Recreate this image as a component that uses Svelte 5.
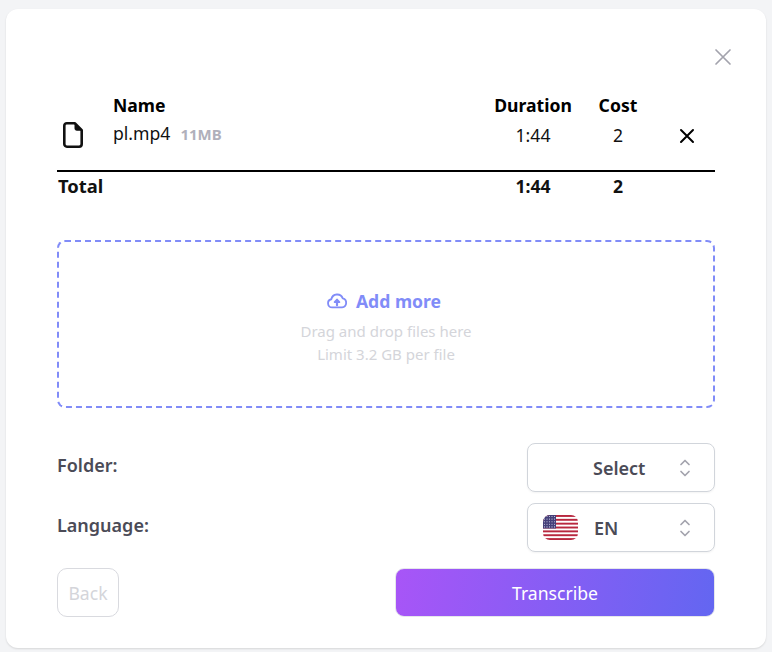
<script>
  const file = { name: 'pl.mp4', size: '11MB', duration: '1:44', cost: 2 };
</script>

<div class="page">
  <div class="card">
    <div class="top">
      <button class="close" aria-label="Close">
        <svg width="24" height="24" viewBox="0 0 24 24" fill="none" stroke="#a3a3ad" stroke-width="1.700" stroke-linecap="round"><path d="M5 5l14 14M19 5L5 19" /></svg>
      </button>
    </div>

    <div class="table">
      <div class="row head">
        <span></span>
        <span>Name</span>
        <span class="mid">Duration</span>
        <span class="mid">Cost</span>
        <span></span>
      </div>
      <div class="row item">
        <svg class="file" width="28" height="30" viewBox="0 0 28 30" fill="none" stroke="#111" stroke-width="2.600" stroke-linejoin="round"><path d="M7.800 4.300H16l6.700 6.900v13.900a2.600 2.600 0 0 1-2.600 2.600H7.900a2.600 2.600 0 0 1-2.600-2.600V6.800a2.500 2.500 0 0 1 2.500-2.500z" /><path d="M16 4.300l6.700 6.900h-5.200A1.500 1.500 0 0 1 16 9.700z" fill="#111" stroke-width="1" /></svg>
        <span class="fname">{file.name}<small>{file.size}</small></span>
        <span class="mid">{file.duration}</span>
        <span class="mid">{file.cost}</span>
        <button class="remove" aria-label="Remove">
          <svg width="24" height="24" viewBox="0 0 24 24" fill="none" stroke="#000" stroke-width="2" stroke-linecap="round"><path d="M6 6l12 12M18 6L6 18" /></svg>
        </button>
      </div>
      <div class="row total">
        <span class="total-label">Total</span>
        <span class="mid">{file.duration}</span>
        <span class="mid">{file.cost}</span>
        <span></span>
      </div>
    </div>

    <div class="drop">
      <div class="add">
        <svg width="22" height="22" viewBox="0 0 24 24" fill="none" stroke="#818cf8" stroke-width="2" stroke-linecap="round" stroke-linejoin="round"><path d="M6.800 19a4.500 4.500 0 0 1-1-8.900 6.500 6.500 0 0 1 12.500-.9A5 5 0 0 1 17.500 19z" /><path d="M12 16.500v-5" stroke-width="2.400" /><path d="M9.400 13.200l2.600-2.800 2.600 2.800z" fill="#818cf8" /></svg>
        <span>Add more</span>
      </div>
      <p>Drag and drop files here</p>
      <p>Limit 3.2 GB per file</p>
    </div>

    <div class="field">
      <span class="label">Folder:</span>
      <div class="select">
        <span class="value center">Select</span>
        <svg class="chev" width="14" height="22" viewBox="0 0 14 22" fill="none" stroke="#a3a3ad" stroke-width="1.700" stroke-linecap="round" stroke-linejoin="round"><path d="M3 7.500L7 3.500l4 4M3 14.500l4 4 4-4" /></svg>
      </div>
    </div>

    <div class="field lang">
      <span class="label">Language:</span>
      <div class="select">
        <svg class="flag" width="35" height="25" viewBox="0 0 35 25">
          <defs><clipPath id="fl"><rect width="35" height="25" rx="7" /></clipPath></defs>
          <g clip-path="url(#fl)">
            <rect width="35" height="25" fill="#fff" />
            {#each [0, 1, 2, 3, 4, 5, 6] as i}
              <rect y={i * 3.85} width="35" height="1.92" fill="#b8283f" />
            {/each}
            <rect width="13" height="13.500" fill="#45407a" />
            {#each [0, 1, 2, 3, 4] as r}
              {#each [0, 1, 2, 3, 4] as c}
                <circle cx={1.500 + c * 2.500} cy={1.500 + r * 2.600} r="0.550" fill="#cfd0e6" />
              {/each}
            {/each}
          </g>
        </svg>
        <span class="value">EN</span>
        <svg class="chev" width="14" height="22" viewBox="0 0 14 22" fill="none" stroke="#a3a3ad" stroke-width="1.700" stroke-linecap="round" stroke-linejoin="round"><path d="M3 7.500L7 3.500l4 4M3 14.500l4 4 4-4" /></svg>
      </div>
    </div>

    <div class="actions">
      <button class="back">Back</button>
      <button class="go">Transcribe</button>
    </div>
  </div>
</div>

<style>
  :global(body) {
    margin: 0;
    background: #f3f4f6;
    font-family: "Noto Sans", sans-serif;
  }

  .page {
    width: 772px;
    height: 652px;
    padding: 9px 6px 4px;
    box-sizing: border-box;
  }

  .card {
    background: #fff;
    border-radius: 12px;
    height: 639px;
    padding: 0 51px;
    box-sizing: border-box;
    box-shadow: 0 1px 2px rgba(0, 0, 0, 0.12);
  }

  .top {
    height: 84px;
    position: relative;
  }

  button {
    font-family: inherit;
    background: none;
    border: none;
    padding: 0;
    cursor: pointer;
  }

  .close {
    position: absolute;
    top: 36px;
    right: -20px;
    display: flex;
  }

  .row {
    display: grid;
    grid-template-columns: 56px 370px 100px 70px 1fr;
    align-items: center;
    color: #111;
    font-size: 17.600px;
  }

  .head {
    height: 24px;
    font-weight: 700;
    line-height: 24px;
    color: #000;
  }

  .item {
    height: 36px;
    align-items: start;
    padding-bottom: 17px;
  }

  .file {
    margin-left: 2px;
    margin-top: 2px;
    display: block;
  }

  .fname {
    line-height: 24px;
    margin-top: 4px;
  }

  .fname small {
    font-size: 15px;
    font-weight: 700;
    color: #b0b0bb;
    margin-left: 10px;
  }

  .item .mid {
    margin-top: 6px;
    line-height: 24px;
  }

  .mid {
    text-align: center;
  }

  .remove {
    display: flex;
    margin: 7px 0 0 22px;
  }

  .total {
    border-top: 2px solid #000;
    height: 28px;
    padding-bottom: 2px;
    font-weight: 700;
    line-height: 24px;
    grid-template-columns: 426px 100px 70px 1fr;
  }

  .total-label {
    padding-left: 1px;
    font-size: 18.400px;
  }

  .drop {
    margin-top: 38px;
    height: 168px;
    box-sizing: border-box;
    border: 2px dashed #818cf8;
    border-radius: 8px;
    display: flex;
    flex-direction: column;
    align-items: center;
    padding-top: 45px;
  }

  .add {
    display: flex;
    align-items: center;
    gap: 8px;
    color: #818cf8;
    font-size: 17.600px;
    font-weight: 700;
    line-height: 28px;
    margin: 0 5px 5px 0;
  }

  .drop p {
    margin: 0;
    font-size: 15px;
    line-height: 23px;
    color: #d4d5da;
  }

  .field {
    display: flex;
    justify-content: space-between;
    align-items: center;
    margin-top: 35px;
  }

  .field.lang {
    margin-top: 11px;
  }

  .label {
    font-size: 18px;
    font-weight: 600;
    color: #4b4b57;
    margin-top: -5px;
  }

  .select {
    width: 188px;
    height: 49px;
    box-sizing: border-box;
    border: 1px solid #d1d5db;
    border-radius: 8px;
    display: flex;
    align-items: center;
    position: relative;
    padding: 0 22px 0 15px;
    box-shadow: 0 1px 2px rgba(0, 0, 0, 0.05);
  }

  .value {
    font-size: 18px;
    font-weight: 600;
    color: #4b4b57;
    margin-left: 16px;
  }

  .value.center {
    margin-left: 50px;
  }

  .chev {
    margin-left: auto;
  }

  .actions {
    display: flex;
    justify-content: space-between;
    margin-top: 16px;
  }

  .back {
    width: 62px;
    height: 49px;
    border: 1px solid #d9dadf;
    border-radius: 10px;
    color: #d4d5da;
    font-size: 17.600px;
  }

  .go {
    width: 320px;
    height: 49px;
    border: 1px solid #e5e7eb;
    border-radius: 9px;
    color: #fff;
    font-size: 17.600px;
    background: linear-gradient(100deg, #a855f7, #6366f1);
  }
</style>
